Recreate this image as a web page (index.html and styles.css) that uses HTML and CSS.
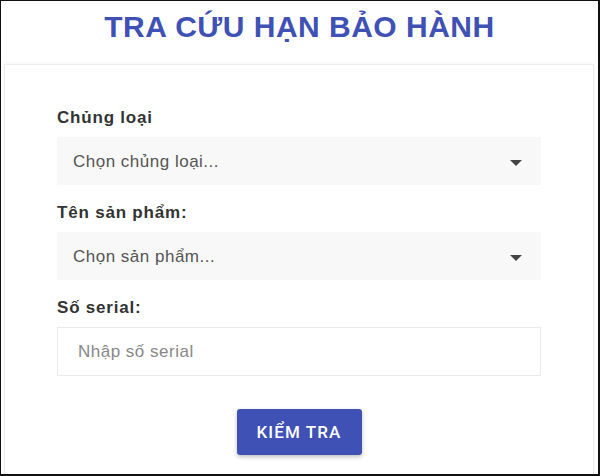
FILE: index.html
```html
<!DOCTYPE html>
<html lang="vi">
<head>
    <meta charset="UTF-8">
    <meta name="viewport" content="width=device-width, initial-scale=1.0">
    <title>Tra cứu hạn bảo hành</title>
    <link rel="stylesheet" href="styles.css">
</head>
<body>
    <div class="page">
        <h1 class="page-title">TRA CỨU HẠN BẢO HÀNH</h1>

        <div class="card">
            <form id="warranty-form">
                <div class="form-group">
                    <label class="form-label" for="category">Chủng loại</label>
                    <div class="select-box">
                        <select id="category" name="category">
                            <option value="">Chọn chủng loại...</option>
                        </select>
                        <span class="select-arrow"></span>
                    </div>
                </div>

                <div class="form-group">
                    <label class="form-label" for="product">Tên sản phẩm:</label>
                    <div class="select-box">
                        <select id="product" name="product">
                            <option value="">Chọn sản phẩm...</option>
                        </select>
                        <span class="select-arrow"></span>
                    </div>
                </div>

                <div class="form-group">
                    <label class="form-label" for="serial">Số serial:</label>
                    <input type="text" id="serial" name="serial" class="text-input" placeholder="Nhập số serial">
                </div>

                <div class="form-actions">
                    <button type="submit" class="action-button">KIỂM TRA</button>
                </div>
            </form>
        </div>
    </div>
</body>
</html>
```

FILE: styles.css
```css
html, body {
    margin: 0;
    padding: 0;
    background-color: #ffffff;
}
body {
    font-family: 'Liberation Sans', Arial, sans-serif;
}
.page {
    width: 600px;
    height: 476px;
    box-sizing: border-box;
    border-top: 1px solid #111;
    border-left: 1px solid #111;
    border-right: 2px solid #111;
    border-bottom: 2px solid #111;
    overflow: hidden;
}
.page-title {
    margin: 0;
    height: 63px;
    box-sizing: border-box;
    padding-top: 8px;
    font-size: 30px;
    line-height: 36px;
    font-weight: bold;
    letter-spacing: 0.5px;
    color: #3f51b5;
    text-align: center;
}
.card {
    margin: 0 4px 0 3px;
    border: 1px solid #ececec;
    box-shadow: 0 0 3px rgba(0, 0, 0, 0.06);
    padding: 43px 52px 40px;
}

.form-group {
    margin-bottom: 18px;
}
.form-label {
    display: block;
    font-size: 17px;
    line-height: 20px;
    font-weight: bold;
    letter-spacing: 0.8px;
    color: #333;
    margin-bottom: 9px;
}

.select-box {
    position: relative;
}
.select-box select {
    display: block;
    width: 100%;
    height: 48px;
    padding: 0 16px;
    border: none;
    background-color: #f8f8f8;
    font-family: inherit;
    font-size: 17px;
    letter-spacing: 0.5px;
    color: #555;
    appearance: none;
    -webkit-appearance: none;
    outline: none;
}
.select-arrow {
    position: absolute;
    right: 19px;
    top: 23px;
    width: 0;
    height: 0;
    border-left: 6px solid transparent;
    border-right: 6px solid transparent;
    border-top: 6px solid #444;
    pointer-events: none;
}

.text-input {
    display: block;
    width: 100%;
    height: 49px;
    box-sizing: border-box;
    padding: 0 20px;
    border: 1px solid #eaeaea;
    background-color: #fff;
    font-family: inherit;
    font-size: 17px;
    letter-spacing: 0.5px;
    color: #333;
    outline: none;
}
.text-input::placeholder {
    color: #888;
}

.form-actions {
    display: flex;
    justify-content: center;
    padding-top: 15px;
}
.action-button {
    width: 125px;
    height: 46px;
    border: none;
    border-radius: 3px;
    background-color: #3f51b5;
    color: #ffffff;
    font-family: Roboto, 'Liberation Sans', sans-serif;
    font-size: 17px;
    font-weight: 500;
    letter-spacing: 1.1px;
    box-shadow: 0 2px 4px rgba(0, 0, 0, 0.25);
    cursor: pointer;
}
```
